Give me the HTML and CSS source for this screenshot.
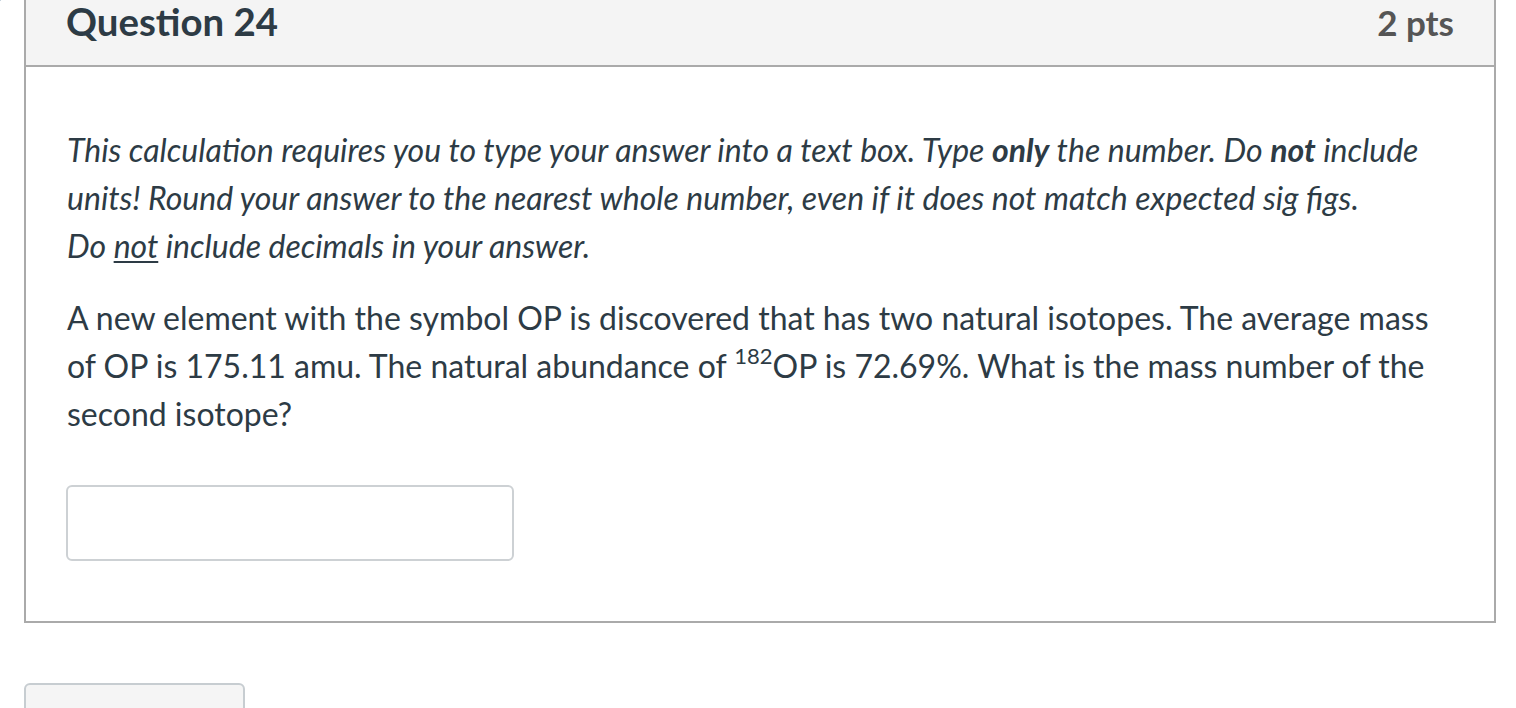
FILE: index.html
```html
<!DOCTYPE html>
<html lang="en">
<head>
<meta charset="utf-8">
<title>Question 24</title>
<link rel="stylesheet" href="styles.css">
</head>
<body>
<div class="page">
  <svg class="flag" width="10" height="22" viewBox="0 0 10 22" aria-hidden="true">
    <path d="M-3 1 L6 9.5 L-3 18" fill="none" stroke="#9fb3c4" stroke-width="2.8" stroke-linejoin="round"/>
  </svg>
  <div class="question">
    <div class="q-header">
      <span class="q-name">Question 24</span>
      <span class="q-points">2 pts</span>
    </div>
    <div class="q-body">
      <p class="instructions">This calculation requires you to type your answer into a text box. Type <b>only</b> the number. Do <b>not</b> include units! Round your answer to the nearest whole number, even if it does not match expected sig figs.<br>Do <u>not</u> include decimals in your answer.</p>
      <p class="problem">A new element with the symbol OP is discovered that has two natural isotopes. The average mass of OP is 175.11 amu. The natural abundance of <sup>182</sup>OP is 72.69%. What is the mass number of the second isotope?</p>
      <input class="answer" type="text" aria-label="Answer">
    </div>
  </div>
  <div class="nav">
    <button class="nav-btn" type="button"></button>
  </div>
</div>
</body>
</html>
```

FILE: styles.css
```css
html, body {
  margin: 0;
  padding: 0;
  background: #ffffff;
  overflow: hidden;
}

body {
  font-family: Lato, "Open Sans", "Liberation Sans", sans-serif;
  color: #2d3b45;
}

.page {
  position: relative;
  padding-left: 24px;
  width: 1472px;
}

.flag {
  position: absolute;
  left: 0;
  top: 8px;
  z-index: 2;
}

.question {
  margin-top: -24px;
  border: 2px solid #aaaaaa;
  background: #ffffff;
}

.q-header {
  display: flex;
  justify-content: space-between;
  align-items: baseline;
  padding: 22px 40px 21px;
  background: #f4f4f4;
  border-bottom: 2px solid #aaaaaa;
}

.q-name {
  font-size: 38.4px;
  font-weight: 700;
  line-height: 43px;
  color: #2d3b45;
}

.q-points {
  font-size: 35px;
  font-weight: 700;
  line-height: 43px;
  color: #555555;
}

.q-body {
  padding: 59px 40px 60px 41px;
}

.q-body p {
  margin: 0;
  font-size: 32px;
  line-height: 48px;
}

.instructions {
  font-style: italic;
  margin-bottom: 24px !important;
}

.instructions u {
  text-decoration-thickness: 2px;
  text-underline-offset: 3px;
}

.problem {
  margin-bottom: 47px !important;
}

.problem sup {
  font-size: 22px;
  line-height: 0;
  vertical-align: 14px;
}

.answer {
  display: block;
  box-sizing: border-box;
  width: 448px;
  height: 76px;
  margin: 0 0 0 -1px;
  border: 2px solid #cdd1d4;
  border-radius: 6px;
  background: #ffffff;
  font-family: inherit;
  font-size: 28px;
  padding: 0 16px;
  outline: none;
}

.nav {
  padding-top: 60px;
}

.nav-btn {
  display: block;
  box-sizing: border-box;
  width: 221px;
  height: 60px;
  background: #f5f5f5;
  border: 2px solid #c7cdd1;
  border-radius: 6px;
  padding: 0;
}
```
